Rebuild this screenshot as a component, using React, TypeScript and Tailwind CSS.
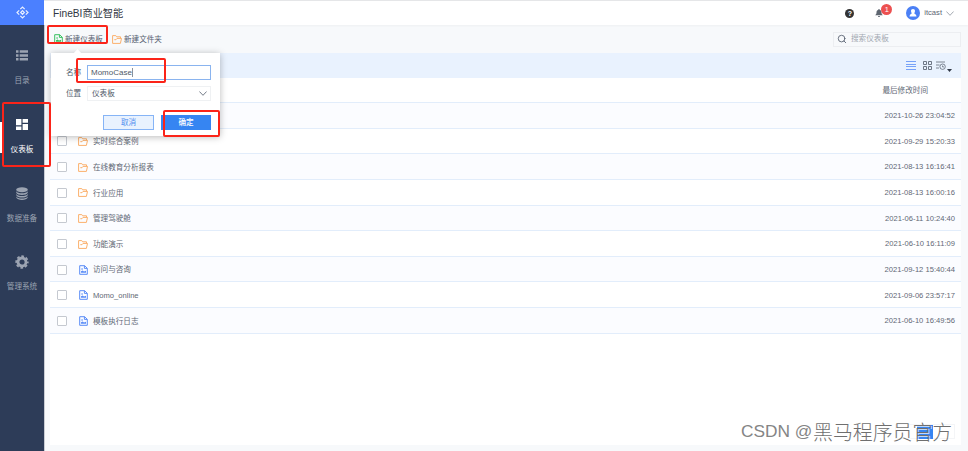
import { Search } from "lucide-react";

const menuItems = [
  { label: "目录", icon: <ListIcon /> },
  { label: "仪表板", icon: <DashboardIcon />, active: true },
  { label: "数据准备", icon: <DatabaseIcon /> },
  { label: "管理系统", icon: <GearIcon /> },
];

const rows = [
  { name: "", type: "folder", time: "2021-10-26 23:04:52" },
  { name: "实时综合案例", type: "folder", time: "2021-09-29 15:20:33" },
  { name: "在线教育分析报表", type: "folder", time: "2021-08-13 16:16:41" },
  { name: "行业应用", type: "folder", time: "2021-08-13 16:00:16" },
  { name: "管理驾驶舱", type: "folder", time: "2021-06-11 10:24:40" },
  { name: "功能演示", type: "folder", time: "2021-06-10 16:11:09" },
  { name: "访问与咨询", type: "file", time: "2021-09-12 15:40:44" },
  { name: "Momo_online", type: "file", time: "2021-09-06 23:57:17" },
  { name: "模板执行日志", type: "file", time: "2021-06-10 16:49:56" },
];

function ListIcon() {
  return (
    <svg className="w-[12px] h-[11px]" viewBox="0 0 12 11" fill="currentColor">
      <path d="M0 .3h2.5v2.5H0zM3.7.3H12v2.5H3.7zM0 4.2h2.5v2.5H0zM3.7 4.2H12v2.5H3.7zM0 8.1h2.5v2.5H0zM3.7 8.1H12v2.5H3.7z" />
    </svg>
  );
}

function DashboardIcon() {
  return (
    <svg className="w-[12px] h-[11px]" viewBox="0 0 12 11" fill="currentColor">
      <path d="M0 0h5.4v6.2H0zM6.6 0H12v3.8H6.6zM0 7.4h5.4V11H0zM6.6 5H12v6H6.6z" />
    </svg>
  );
}

function DatabaseIcon() {
  return (
    <svg className="w-[12px] h-[13px]" viewBox="0 0 12 13" fill="currentColor">
      <ellipse cx="6" cy="2.7" rx="5.8" ry="2.5" />
      <path d="M.2 4.2c1 1.5 3 2 5.8 2s4.8-.5 5.8-2v1.4C11.2 7.4 8.7 8 6 8S.8 7.4.2 5.6z" />
      <path d="M.2 7c1 1.5 3 2 5.8 2s4.8-.5 5.8-2v1c-.6 1.900-3.100 2.500-5.800 2.500S.8 9.900.2 8z" />
      <path d="M.2 9.500c1 1.500 3 2 5.800 2s4.800-.5 5.800-2v.7c-.6 2-3.100 2.700-5.800 2.700S.8 12.200.2 10.200z" />
    </svg>
  );
}

function GearIcon() {
  return (
    <svg className="w-[14px] h-[14px]" viewBox="0 0 14 14" fill="none" stroke="currentColor">
      <circle cx="7" cy="7" r="4" strokeWidth="2.8" />
      <circle cx="7" cy="7" r="5.8" strokeWidth="1.7" strokeDasharray="2.7 1.855" strokeDashoffset="1.35" />
    </svg>
  );
}

function FolderIcon() {
  return (
    <svg className="w-[10px] h-[9px] shrink-0" viewBox="0 0 10 9" fill="none" stroke="#fbb06c" strokeWidth="1">
      <path d="M8.500 3.300V1.800H4.600L3.800.6H.6v7.800h7.800l1.100-5H5L4 4.700H2.300" />
    </svg>
  );
}

function FileIcon({ className }: { className: string }) {
  return (
    <svg className={`w-[9px] h-[10px] shrink-0 ${className}`} viewBox="0 0 9 10" fill="none" stroke="currentColor" strokeWidth="1">
      <path d="M.7.7h4.900l2.700 2.600v6H.7zM5.400.7v2.700h2.800M2.200 4h1.800" />
      <path d="M2 7.800V6.200l1.700-.6L5 6.500l2-.8v2.100z" fill="currentColor" stroke="none" />
    </svg>
  );
}

function ChevronIcon({ className }: { className: string }) {
  return (
    <svg className={className} viewBox="0 0 8 5" fill="none" stroke="currentColor" strokeWidth=".8">
      <path d="M.4.5 4 4.300 7.600.5" />
    </svg>
  );
}

function Sidebar() {
  return (
    <aside className="w-[44px] shrink-0 flex flex-col bg-[#2d3c58]">
      <div className="h-[25px] shrink-0 flex items-center justify-center bg-[#4b80ff]">
        <svg className="w-[13px] h-[13px]" viewBox="0 0 13 13" fill="none" stroke="#e8efff" strokeWidth="1.2">
          <path d="M6.500 4.700 8.300 6.500 6.500 8.300 4.700 6.500z" />
          <path d="M4.300 3.200 6.500 1l2.200 2.200M9.800 4.300 12 6.500 9.800 8.700M8.700 9.800 6.500 12 4.300 9.800M3.200 8.700 1 6.500l2.200-2.200" />
        </svg>
      </div>
      <nav className="pt-[8.5px]">
        {menuItems.map((item) => (
          <div
            key={item.label}
            className={`relative h-[68.7px] flex flex-col items-center justify-center gap-[13px] text-[7.6px] leading-[11px] ${item.active ? "text-white" : "text-[#9ca4b2]"}`}
          >
            {item.active && <span className="absolute left-0 top-[20px] w-[2px] h-[31px] bg-white" />}
            <span className="h-[13px] flex items-center">{item.icon}</span>
            <span className="whitespace-nowrap">{item.label}</span>
          </div>
        ))}
      </nav>
    </aside>
  );
}

function Header() {
  return (
    <header className="h-[25px] shrink-0 bg-white border-t border-[#e5e6e8] flex items-center pl-[9px] pr-[14px] shadow-[0_1px_2px_rgba(0,0,0,0.04)]">
      <h1 className="pt-px text-[10.2px] text-[#303642]">FineBI商业智能</h1>
      <div className="ml-auto flex items-center text-[7.6px] text-[#5b6472]">
        <span className="w-[9px] h-[9px] rounded-full bg-[#333] text-white text-[7px] leading-[9px] font-bold text-center">?</span>
        <span className="relative ml-[21px]">
          <svg className="w-[8px] h-[8px]" viewBox="0 0 8 8" fill="#5e6570">
            <path d="M4 0c.5 0 .7.3.7.7C6 1.200 6.500 2 6.500 3.500c0 1.200.3 1.900 1.300 2.700H.2C1.200 5.400 1.500 4.700 1.500 3.500 1.500 2 2 1.200 3.300.7 3.300.3 3.500 0 4 0zM3 6.900h2C5 7.600 4.500 8 4 8s-1-.4-1-1.100z" />
          </svg>
          <span className="absolute left-[6px] -top-[5px] w-[11px] h-[11px] rounded-full bg-[#ec5050] text-white text-[7.5px] leading-[11px] text-center">1</span>
        </span>
        <svg className="ml-[23px] w-[14px] h-[14px]" viewBox="0 0 14 14">
          <circle cx="7" cy="7" r="7" fill="#4b80f5" />
          <path d="M7 3c1.300 0 2 .9 2 2.100 0 .9-.4 1.700-.8 2.100.3.8 2.300 1 2.300 3.300h-7c0-2.300 2-2.500 2.300-3.300C5.400 6.800 5 6 5 5.100 5 3.900 5.700 3 7 3z" fill="#fff" />
        </svg>
        <span className="ml-[4px]">itcast</span>
        <ChevronIcon className="ml-[4px] w-[8px] h-[5px] text-[#8d939d]" />
      </div>
    </header>
  );
}

function Toolbar() {
  return (
    <div className="h-[28px] shrink-0 flex items-center pl-[10px] pr-[7px] text-[7.6px] text-[#56606f]">
      <FileIcon className="text-[#39c161]" />
      <span className="ml-[2px] pt-px">新建仪表板</span>
      <span className="ml-[9px] flex"><FolderIcon /></span>
      <span className="ml-[2px] pt-px">新建文件夹</span>
      <div className="ml-auto w-[128px] h-[15px] border border-[#eceef1] flex items-center pl-[3px] text-[#a2a8b1]">
        <Search className="w-[10px] h-[10px] text-[#505a6a]" strokeWidth={2} />
        <span className="ml-[4px]">搜索仪表板</span>
      </div>
    </div>
  );
}

function FileTable() {
  return (
    <main className="ml-[6px] mr-[7px] h-[392px] bg-white text-[7.6px] text-[#5f6875]">
      <div className="h-[25px] bg-[#e9f2fe] flex items-center justify-end pr-[9px]">
        <svg className="w-[10px] h-[9px]" viewBox="0 0 10 9" stroke="#76a2f8">
          <path d="M0 .5h10M0 3.500h10M0 5.500h10M0 8.500h10" />
        </svg>
        <svg className="ml-[7px] w-[9px] h-[9px]" viewBox="0 0 9 9" fill="none" stroke="#606977" strokeWidth=".9">
          <path d="M.5.5h3v3h-3zM5.500.5h3v3h-3zM.5 5.500h3v3h-3zM5.500 5.500h3v3h-3z" />
        </svg>
        <svg className="ml-[4px] w-[10px] h-[9px]" viewBox="0 0 10 9" fill="none" stroke="#606977" strokeWidth=".8">
          <path d="M0 1h9M0 4h3.500M0 7h3M6.500 4.500v1.400H8" />
          <circle cx="6.600" cy="5.700" r="2.700" />
        </svg>
        <svg className="ml-[1px] mt-[9px] w-[5px] h-[3px]" viewBox="0 0 5 3" fill="#303846">
          <path d="M0 0h5L2.500 3z" />
        </svg>
      </div>
      <div className="h-[25px] border-b border-[#e2edfb] flex items-center justify-end pt-px pr-[33px]">最后修改时间</div>
      {rows.map((row, i) => (
        <div
          key={row.time}
          className={`h-[25.65px] border-b border-[#e2edfb] flex items-center pt-px pl-[7px] pr-[6px] ${i % 2 === 0 ? "bg-[#fbfcff]" : "bg-white"}`}
        >
          <span className="w-[10px] h-[10px] border border-[#c5c9d0] rounded-[1px] bg-white" />
          <span className="ml-[11px] w-[10px] flex justify-center">
            {row.type === "folder" ? <FolderIcon /> : <FileIcon className="text-[#5b8df7]" />}
          </span>
          <span className="ml-[5px] pt-px">{row.name}</span>
          <span className="ml-auto">{row.time}</span>
        </div>
      ))}
    </main>
  );
}

function CreateDialog() {
  return (
    <div className="absolute left-[51px] top-[53px] w-[169px] h-[83px] bg-white shadow-[0_1px_7px_rgba(0,0,0,0.28)] text-[7.6px] text-[#505a69]">
      <svg className="absolute left-[22px] -top-[4px] w-[9px] h-[5px]" viewBox="0 0 9 5" fill="#fff">
        <path d="M0 5 4.500 0 9 5z" />
      </svg>
      <div className="pt-[12px] pl-[15px] pr-[9px]">
        <div className="flex items-center h-[15px]">
          <span className="w-[21px]">名称</span>
          <div className="flex-1 h-[15px] border border-[#8ab4ef] flex items-center pl-[3px]">
            <span className="text-[8px]">MomoCase</span>
            <span className="w-px h-[9px] bg-[#8b929c]" />
          </div>
        </div>
        <div className="mt-[6px] flex items-center h-[15px]">
          <span className="w-[21px]">位置</span>
          <div className="flex-1 h-[15px] border border-[#eff1f3] flex items-center justify-between pl-[4px] pr-[3px]">
            <span>仪表板</span>
            <ChevronIcon className="w-[8px] h-[5px]" />
          </div>
        </div>
      </div>
      <div className="mt-[14px] pr-[9px] flex justify-end gap-[7px]">
        <button className="w-[51px] h-[15px] border border-[#86b4f6] bg-[#e9f2fe] text-[#518dee] flex items-center justify-center">取消</button>
        <button className="w-[50px] h-[15px] bg-[#3685f2] text-white font-medium flex items-center justify-center">确定</button>
      </div>
    </div>
  );
}

function Highlight({ className }: { className: string }) {
  return <div className={`absolute border-2 border-[#fb2419] rounded-[2px] ${className}`} />;
}

export default function App() {
  return (
    <div className="relative w-[968px] h-[451px] overflow-hidden flex bg-[#f7f9fb] font-['Liberation_Sans','Noto_Sans_CJK_SC',sans-serif]">
      <Sidebar />
      <div className="flex-1 min-w-0 flex flex-col shadow-[inset_1px_0_0_#c8ccd4]">
        <Header />
        <Toolbar />
        <FileTable />
      </div>
      <CreateDialog />

      {/* Step markers */}
      <Highlight className="left-[47px] top-[25px] w-[61px] h-[19px]" />
      <Highlight className="left-[76px] top-[58px] w-[90px] h-[25px]" />
      <Highlight className="left-[163px] top-[110px] w-[57px] h-[27px]" />
      <Highlight className="left-[2px] top-[102px] w-[49px] h-[65px]" />

      {/* Current page number */}
      <div className="absolute left-[895px] top-[424px] w-[60px] h-[15px] border border-[#f4f5f7] flex pl-[21px]">
        <span className="w-[16px] h-[14px] bg-[#3685f2]" />
      </div>
      <div className="absolute left-[741px] top-[418px] flex items-center h-[28px] whitespace-nowrap text-[#858585] [text-shadow:1px_1px_0_#ffffffb0]">
        <span className="w-[72px] text-[17.3px]">CSDN @</span>
        <span className="text-[19.9px] font-light text-[#6f6f6f] font-['Noto_Sans_CJK_SC',sans-serif]">黑马程序员官方</span>
      </div>
    </div>
  );
}
